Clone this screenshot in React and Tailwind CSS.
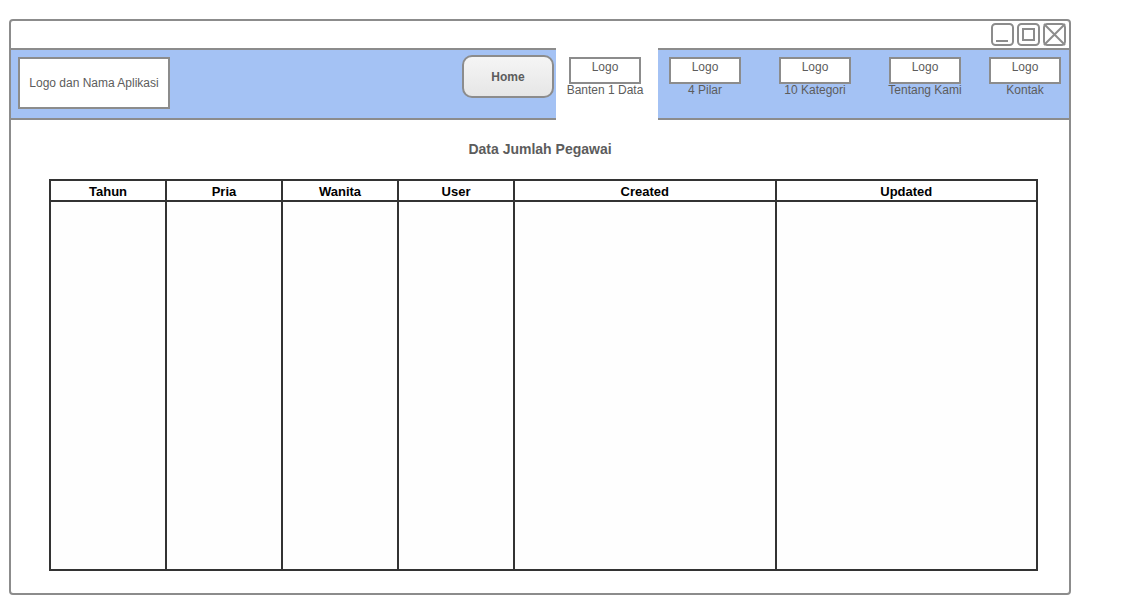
const links = [
  { label: "4 Pilar", gap: "ml-[7px]" },
  { label: "10 Kategori", gap: "ml-[30px]" },
  { label: "Tentang Kami", gap: "ml-[30px]" },
  { label: "Kontak", gap: "ml-5" },
];

const columns = [
  { label: "Tahun", width: "w-[116px]" },
  { label: "Pria", width: "w-[116px]" },
  { label: "Wanita", width: "w-[116px]" },
  { label: "User", width: "w-[116px]" },
  { label: "Created", width: "w-auto" },
  { label: "Updated", width: "w-auto" },
];

function WindowButton({ label, children }) {
  return (
    <button type="button" aria-label={label} className="size-[23px]">
      <svg viewBox="0 0 23 23" className="size-full" fill="none" stroke="#8c8c8c" strokeWidth="2">
        <rect x="1" y="1" width="21" height="21" rx="3.5" />
        {children}
      </svg>
    </button>
  );
}

function NavContent({ label }) {
  return (
    <>
      <span className="h-[27px] w-[72px] border-2 border-[#8c8c8c] bg-white text-center leading-4">
        Logo
      </span>
      <span className="leading-3 whitespace-nowrap">{label}</span>
    </>
  );
}

export default function App() {
  return (
    <div className="min-h-screen bg-white pt-[19px] pr-[51px] pb-[19px] pl-[9px] font-['Liberation_Sans',Arial,sans-serif] text-xs text-[#5c5c5c]">
      <div className="rounded-[4px] border-2 border-[#8c8c8c] bg-white">
        <div className="flex h-[27px] justify-end gap-[3px] pt-[2px] pr-[3px]">
          <WindowButton label="Minimize">
            <path d="M5 18h12" />
          </WindowButton>
          <WindowButton label="Maximize">
            <rect x="6" y="6" width="11" height="11" />
          </WindowButton>
          <WindowButton label="Close">
            <path d="M1 1l21 21M22 1L1 22" />
          </WindowButton>
        </div>

        <header className="flex h-[72px] items-start border-y-2 border-[#8c8c8c] bg-[#a4c2f4] pr-1 pl-[7px]">
          <div className="mt-[7px] flex h-[52px] w-[152px] items-center justify-center border-2 border-[#8c8c8c] bg-white">
            Logo dan Nama Aplikasi
          </div>
          <nav className="ml-auto flex items-start">
            <button
              type="button"
              className="mt-[5px] mr-[2px] h-[43px] w-[92px] rounded-[10px] border-2 border-[#8c8c8c] bg-linear-to-b from-[#f5f5f5] to-[#e6e6e6] font-bold"
            >
              Home
            </button>
            <a
              href="#banten-1-data"
              aria-current="page"
              className="-my-[2px] flex h-[72px] w-[102px] flex-col items-center bg-white pt-[9px] pr-1"
            >
              <NavContent label="Banten 1 Data" />
            </a>
            {links.map((link) => (
              <a
                key={link.label}
                href="#"
                className={`${link.gap} flex w-20 flex-col items-center pt-[7px]`}
              >
                <NavContent label={link.label} />
              </a>
            ))}
          </nav>
        </header>

        <main className="pt-[19px] pb-[22px]">
          <h1 className="mb-5 text-center text-sm leading-5 font-bold">Data Jumlah Pegawai</h1>
          <div className="pr-[31px] pl-[38px]">
            <table className="w-full table-fixed border-collapse text-[13px] text-black">
              <thead>
                <tr className="h-[21px]">
                  {columns.map((column) => (
                    <th
                      key={column.label}
                      scope="col"
                      className={`${column.width} border-2 border-[#333333] px-0 pt-[2px] pb-0 leading-4 font-bold`}
                    >
                      {column.label}
                    </th>
                  ))}
                </tr>
              </thead>
              <tbody>
                <tr className="h-[369px]">
                  {columns.map((column) => (
                    <td key={column.label} className="border-2 border-[#333333] bg-[#fefefe] p-0" />
                  ))}
                </tr>
              </tbody>
            </table>
          </div>
        </main>
      </div>
    </div>
  );
}
